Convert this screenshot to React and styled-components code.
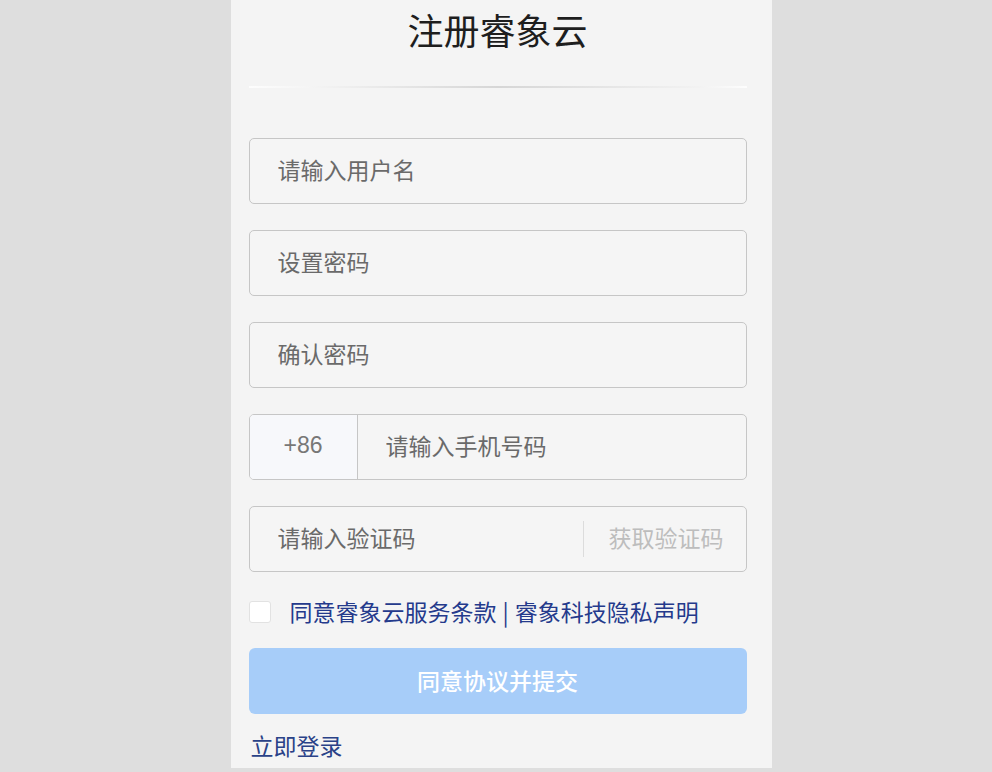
import React from 'react'
import styled, { createGlobalStyle } from 'styled-components'

const GlobalStyle = createGlobalStyle`
    html, body {
        margin: 0;
        padding: 0;
        background: #dedede;
        font-family: "Noto Sans CJK SC", "Noto Sans", sans-serif;
    }
`

const StyledPage = styled.div`
    display: flex;
    justify-content: center;
    padding-left: 10px;
    min-height: 772px;
`

const StyledPanel = styled.main`
    width: 541px;
    height: 768px;
    box-sizing: border-box;
    padding: 0 25px 0 18px;
    background: #f4f4f4;

    display: flex;
    flex-direction: column;
`

const StyledTitle = styled.h1`
    margin: 0;
    height: 60px;
    line-height: 58px;
    text-align: center;
    font-size: 36px;
    font-weight: 400;
    color: #1e1e1e;
`

const StyledDivider = styled.div`
    height: 2px;
    margin-top: 26px;
    background: linear-gradient(to right, #fdfdfd 0%, #f6f6f6 10%, #d6d6d6 50%, #f2f2f2 90%, #fdfdfd 100%);
`

const StyledFields = styled.div`
    display: flex;
    flex-direction: column;
    gap: 26px;
    margin-top: 50px;
`

const StyledField = styled.label`
    display: flex;
    align-items: center;
    height: 66px;
    box-sizing: border-box;
    border: 1px solid #c6c6c6;
    border-radius: 5px;
    background: #f5f5f5;
    overflow: hidden;
`

const StyledInput = styled.input`
    flex: 1;
    min-width: 0;
    height: 100%;
    box-sizing: border-box;
    border: none;
    outline: none;
    background: transparent;
    padding: 0 0 5px 28px;
    font-family: inherit;
    font-size: 23px;
    color: #333;

    &::placeholder {
        color: #6a6a6a;
    }
`

const StyledPrefix = styled.span`
    width: 108px;
    height: 100%;
    flex-shrink: 0;
    display: flex;
    align-items: center;
    justify-content: center;
    padding-bottom: 3px;
    box-sizing: border-box;
    background: #f7f8fb;
    border-right: 1px solid #c6c6c6;
    font-family: "Liberation Sans", Arial, sans-serif;
    font-size: 23px;
    color: #777;
`

const StyledSendCode = styled.span`
    display: flex;
    align-items: center;
    height: 36px;
    padding: 0 22px 4px 25px;
    box-sizing: border-box;
    border-left: 1px solid #dcdcdc;
    font-size: 23px;
    color: #bdbdbd;
    white-space: nowrap;
`

const StyledAgreement = styled.div`
    display: flex;
    align-items: center;
    height: 44px;
    margin-top: 17px;
    margin-bottom: 2px;
    font-size: 23px;
    color: #243a8c;
`

const StyledCheck = styled.span`
    width: 22px;
    height: 22px;
    box-sizing: border-box;
    border: 1px solid #e2e2e2;
    border-radius: 3px;
    background: #fff;
    margin: 2px 19px 0 0;
    flex-shrink: 0;
`

const StyledSep = styled.span`
    margin: 0 6px;
`

const StyledSubmit = styled.button`
    height: 66px;
    margin-top: 13px;
    padding: 0 0 3px;
    border: none;
    border-radius: 6px;
    background: #a7cdf9;
    color: #fff;
    font-family: inherit;
    font-size: 23px;
    font-weight: 500;
`

const StyledLogin = styled.a`
    display: block;
    margin-top: 15px;
    padding-left: 2px;
    line-height: 32px;
    font-size: 23px;
    color: #2a4288;
    text-decoration: none;
`

const App = () => {
    return (
        <StyledPage>
            <GlobalStyle />
            <StyledPanel>
                <StyledTitle>注册睿象云</StyledTitle>
                <StyledDivider />
                <StyledFields>
                    <StyledField>
                        <StyledInput placeholder="请输入用户名" />
                    </StyledField>
                    <StyledField>
                        <StyledInput type="password" placeholder="设置密码" />
                    </StyledField>
                    <StyledField>
                        <StyledInput type="password" placeholder="确认密码" />
                    </StyledField>
                    <StyledField>
                        <StyledPrefix>+86</StyledPrefix>
                        <StyledInput placeholder="请输入手机号码" />
                    </StyledField>
                    <StyledField>
                        <StyledInput placeholder="请输入验证码" />
                        <StyledSendCode>获取验证码</StyledSendCode>
                    </StyledField>
                </StyledFields>
                <StyledAgreement>
                    <StyledCheck />
                    同意睿象云服务条款<StyledSep>|</StyledSep>睿象科技隐私声明
                </StyledAgreement>
                <StyledSubmit>同意协议并提交</StyledSubmit>
                <StyledLogin href="#">立即登录</StyledLogin>
            </StyledPanel>
        </StyledPage>
    )
}

export default App
